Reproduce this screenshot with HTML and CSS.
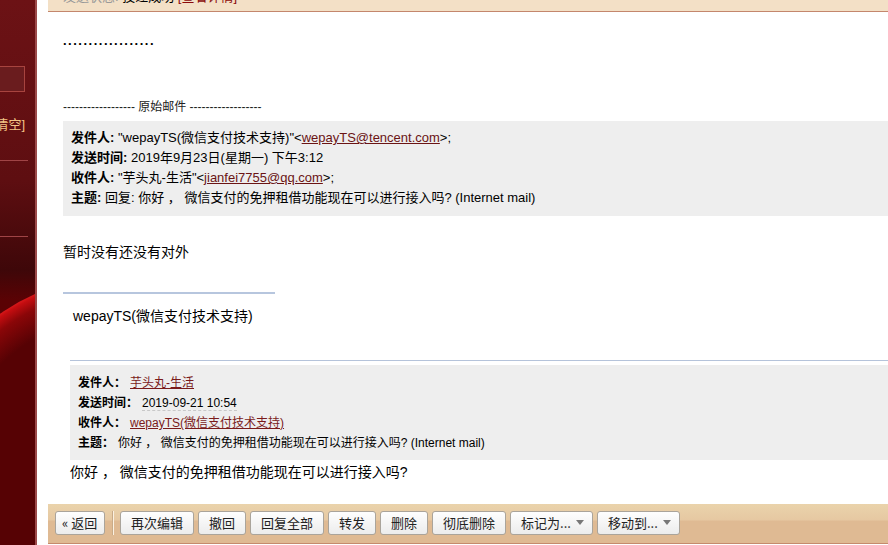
FILE: index.html
```html
<!DOCTYPE html>
<html lang="zh-CN">
<head>
    <meta charset="UTF-8">
    <title>邮件详情</title>
    <link rel="stylesheet" href="styles.css">
</head>
<body>
    <div class="sidebar">
        <div class="side-input"><span class="box"></span></div>
        <div class="side-link"><span>回收站 [清空]</span></div>
        <div class="side-rule first"></div>
        <div class="side-rule"></div>
        <div class="side-glow"></div>
    </div>

    <div class="main">
        <div class="status-bar">
            <div class="status-text">
                <span class="muted">发送状态:</span> 投递成功 <a href="#" class="red">[查看详情]</a>
            </div>
        </div>

        <div class="mail-body">
            <p class="dots">..................</p>
            <p class="orig-sep">------------------ 原始邮件 ------------------</p>

            <div class="quote-head">
                <div><b>发件人:</b> "wepayTS(微信支付技术支持)"&lt;<a href="#">wepayTS@tencent.com</a>&gt;;</div>
                <div><b>发送时间:</b> 2019年9月23日(星期一) 下午3:12</div>
                <div><b>收件人:</b> "芋头丸-生活"&lt;<a href="#">jianfei7755@qq.com</a>&gt;;</div>
                <div><b>主题:</b> 回复: 你好 ， 微信支付的免押租借功能现在可以进行接入吗? (Internet mail)</div>
            </div>

            <p class="reply">暂时没有还没有对外</p>

            <hr class="sig-rule">
            <p class="sig">wepayTS(微信支付技术支持)</p>

            <div class="inner-quote">
                <div class="inner-head">
                    <div><b>发件人：</b><a href="#">芋头丸-生活</a></div>
                    <div><b>发送时间：</b><span class="date">2019-09-21 10:54</span></div>
                    <div><b>收件人：</b><a href="#">wepayTS(微信支付技术支持)</a></div>
                    <div><b>主题：</b>你好 ， 微信支付的免押租借功能现在可以进行接入吗? (Internet mail)</div>
                </div>
                <p class="inner-text">你好 ， 微信支付的免押租借功能现在可以进行接入吗?</p>
            </div>
        </div>

        <div class="toolbar">
            <button class="btn back">« 返回</button>
            <span class="tb-sep"></span>
            <button class="btn">再次编辑</button>
            <button class="btn">撤回</button>
            <button class="btn">回复全部</button>
            <button class="btn">转发</button>
            <button class="btn">删除</button>
            <button class="btn">彻底删除</button>
            <button class="btn drop">标记为... <i class="caret"></i></button>
            <button class="btn drop">移动到... <i class="caret"></i></button>
        </div>
    </div>
</body>
</html>
```

FILE: styles.css
```css
* {
    margin: 0;
    padding: 0;
    box-sizing: border-box;
}

html, body {
    height: 100%;
}

body {
    display: flex;
    overflow: hidden;
    background: #fff;
    color: #000;
    font-family: "Liberation Sans", "Noto Sans CJK SC", sans-serif;
    font-size: 13px;
}

a {
    color: #6b1414;
}

/* left red sidebar */
.sidebar {
    position: relative;
    width: 37px;
    flex-shrink: 0;
    overflow: hidden;
    border-right: 2px solid #9c4a4a;
    background: linear-gradient(#6c1215 0, #5e0e11 180px, #3e0709 270px, #5a0204 300px, #560204 100%);
}

.side-input {
    display: flex;
    justify-content: flex-end;
    margin-top: 66px;
    padding-right: 10px;
}

.side-input .box {
    flex-shrink: 0;
    width: 120px;
    height: 26px;
    border: 1px solid #a8443f;
    background: #6a1c1e;
}

.side-link {
    display: flex;
    justify-content: flex-end;
    margin-top: 24px;
    padding-right: 10px;
    white-space: nowrap;
    color: #f2c586;
    font-size: 13px;
    line-height: 18px;
}

.side-link span {
    flex-shrink: 0;
}

.side-rule {
    width: 28px;
    height: 1px;
    background: #a04446;
    margin-top: 75px;
}

.side-rule.first {
    margin-top: 26px;
}

.side-glow {
    position: absolute;
    left: -90px;
    top: 276px;
    width: 420px;
    height: 420px;
    border-radius: 50%;
    background: radial-gradient(circle at 50% 50%, #560204 0, #560204 170px, #8a0608 196px, #c40d10 207px, #d8181a 210px);
}

/* main column */
.main {
    flex: 1;
    display: flex;
    flex-direction: column;
    min-width: 0;
    margin-left: 11px;
}

.status-bar {
    height: 12px;
    overflow: hidden;
    background: #f3e0c6;
    border-bottom: 1px solid #c4876d;
}

.status-text {
    margin-top: -12px;
    padding-left: 15px;
    font-size: 13px;
    line-height: 18px;
    white-space: nowrap;
}

.muted {
    color: #999;
}

.red {
    color: #8a0a0a;
    text-decoration: none;
}

.mail-body {
    flex: 1;
    overflow: hidden;
    padding-left: 15px;
    line-height: 20px;
}

.dots {
    margin-top: 19px;
    font-size: 13px;
    font-weight: bold;
    letter-spacing: 1.5px;
}

.orig-sep {
    margin-top: 46px;
    font-size: 12px;
    color: #222;
}

.quote-head {
    margin-top: 4px;
    padding: 7px 8px 8px;
    background: #eeeeee;
    font-size: 13px;
}

.reply {
    margin-top: 26px;
    font-size: 14px;
}

.sig-rule {
    width: 212px;
    height: 2px;
    border: 0;
    margin-top: 30px;
    background: #b7c6de;
}

.sig {
    margin-top: 12px;
    padding-left: 10px;
    font-size: 14px;
}

.inner-quote {
    margin-top: 34px;
    margin-left: 7px;
    padding-top: 4px;
    border-top: 1px solid #b5c3da;
}

.inner-head {
    padding: 8px 8px 7px;
    background: #eeeeee;
    font-size: 12px;
}

.inner-head b {
    margin-right: 4px;
}

.inner-head a {
    color: #7a1a1a;
}

.date {
    border-bottom: 1px dashed #c8c8c8;
}

.inner-text {
    margin-top: 2px;
    font-size: 14px;
}

/* bottom toolbar */
.toolbar {
    height: 40px;
    display: flex;
    align-items: center;
    gap: 4px;
    padding: 0 0 2px 7px;
    background: linear-gradient(#ead3ab 0, #e6c8a2 16px, #dfba93 17px, #dfba93 100%);
    border-bottom: 1px solid #c58a6d;
    margin-bottom: 1px;
}

.btn {
    display: flex;
    align-items: center;
    height: 24px;
    padding: 0 10px;
    border: 1px solid #aaa49b;
    border-radius: 3px;
    background: linear-gradient(#fefefe, #ececec);
    color: #222;
    font-family: "Noto Sans CJK SC", sans-serif;
    font-size: 13px;
    white-space: nowrap;
}

.btn.back {
    padding: 0 6px;
    width: 50px;
}

.btn.drop {
    gap: 5px;
    padding: 0 8px 0 10px;
}

.caret {
    width: 0;
    height: 0;
    border-left: 4px solid transparent;
    border-right: 4px solid transparent;
    border-top: 5px solid #777;
}

.tb-sep {
    width: 2px;
    height: 24px;
    margin: 0 2px 0 3px;
    border-left: 1px solid #c9ab88;
    border-right: 1px solid #fbf1e2;
}
```
